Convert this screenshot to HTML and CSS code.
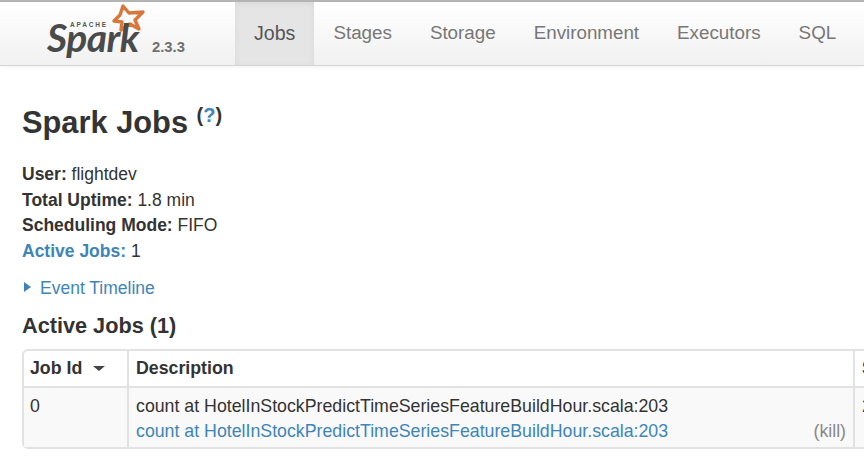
FILE: index.html
```html
<!DOCTYPE html>
<html lang="en">
<head>
  <meta charset="UTF-8">
  <title>Spark Jobs</title>
  <link rel="stylesheet" href="styles.css">
</head>
<body>
  <div class="navbar">
    <a class="brand" href="#">
      <span class="logo">
        <svg class="logo-star" width="36" height="32" viewBox="0 0 36 32">
          <path d="M13 4 L19 11 L33 10 L25 18 L29 27 L20 22 L11 28 L12 20 L4 19 L10 13 Z" fill="none" stroke="#d9773a" stroke-width="3.4" stroke-linejoin="round"/>
        </svg>
        <span class="logo-apache">APACHE</span>
        <span class="logo-spark">Spark</span>
      </span>
      <span class="version">2.3.3</span>
    </a>
    <ul class="nav">
      <li class="active"><a href="#">Jobs</a></li>
      <li><a href="#">Stages</a></li>
      <li><a href="#">Storage</a></li>
      <li><a href="#">Environment</a></li>
      <li><a href="#">Executors</a></li>
      <li><a href="#">SQL</a></li>
    </ul>
  </div>

  <div class="content">
    <h1>Spark Jobs <sup>(<a href="#">?</a>)</sup></h1>

    <ul class="summary">
      <li><strong>User:</strong> flightdev</li>
      <li><strong>Total Uptime:</strong> 1.8 min</li>
      <li><strong>Scheduling Mode:</strong> FIFO</li>
      <li><a href="#"><strong>Active Jobs:</strong></a> 1</li>
    </ul>

    <div class="timeline">
      <span class="arrow-right"></span><a href="#">Event Timeline</a>
    </div>

    <h2>Active Jobs (1)</h2>

    <div class="table-wrap">
      <table>
        <thead>
          <tr>
            <th class="col-id">Job Id <span class="arrow-down"></span></th>
            <th class="col-desc">Description</th>
            <th class="col-sub">Submitted</th>
          </tr>
        </thead>
        <tbody>
          <tr>
            <td>0</td>
            <td>
              <div>count at HotelInStockPredictTimeSeriesFeatureBuildHour.scala:203</div>
              <div class="desc-link">
                <a href="#">count at HotelInStockPredictTimeSeriesFeatureBuildHour.scala:203</a>
                <span class="kill">(kill)</span>
              </div>
            </td>
            <td>2018/11/20</td>
          </tr>
        </tbody>
      </table>
    </div>
  </div>
</body>
</html>
```

FILE: styles.css
```css
html, body {
  height: 460px;
  overflow: hidden;
}

body {
  margin: 0;
  font-family: "Liberation Sans", Arial, sans-serif;
  font-size: 17.5px;
  color: #333;
  background-color: #fff;
}

a {
  color: #3d85b8;
  text-decoration: none;
}

.navbar {
  display: flex;
  height: 63px;
  border-top: 2px solid #b4b4b4;
  border-bottom: 1px solid #d4d4d4;
  background: linear-gradient(to bottom, #fff, #f1f1f1);
  box-shadow: 0 1px 4px rgba(0, 0, 0, 0.06);
}

.brand {
  display: flex;
  width: 235px;
  flex-shrink: 0;
  color: #666;
}

.logo {
  position: relative;
  display: block;
  width: 152px;
  flex-shrink: 0;
}

.logo-star {
  position: absolute;
  left: 110px;
  top: 0;
}

.logo-apache {
  position: absolute;
  left: 70px;
  top: 19px;
  font-size: 6.5px;
  font-weight: bold;
  letter-spacing: 1.8px;
  color: #555;
}

.logo-spark {
  position: absolute;
  left: 47px;
  top: 12px;
  font-family: Lato, sans-serif;
  font-size: 39px;
  font-style: italic;
  font-weight: bold;
  letter-spacing: -0.5px;
  color: #4a4a4a;
}

.version {
  margin-top: 37px;
  font-size: 14.8px;
  font-weight: bold;
  color: #707070;
}

.nav {
  display: flex;
  margin: 0;
  padding: 0;
  list-style: none;
}

.nav a {
  display: block;
  padding: 20px 19px 0;
  height: 43px;
  font-size: 18.8px;
  color: #777;
}

.nav .active a {
  font-size: 19.6px;
  color: #555;
  background-color: #e5e5e5;
  box-shadow: inset 0 2px 6px rgba(0, 0, 0, 0.06);
}

.content {
  padding: 0 22px;
}

h1 {
  margin: 36px 0 0;
  font-size: 30.8px;
  line-height: 42px;
  font-weight: bold;
}

h1 sup {
  font-size: 20px;
  line-height: 0;
  font-weight: bold;
  vertical-align: 11px;
}

.summary {
  margin: 18px 0 0;
  padding: 0;
  list-style: none;
  line-height: 25.5px;
}

.timeline {
  margin-top: 12px;
  line-height: 24px;
}

.arrow-right {
  display: inline-block;
  margin: 0 9px 2px 2px;
  border-top: 5.5px solid transparent;
  border-bottom: 5.5px solid transparent;
  border-left: 7px solid #3d85b8;
}

h2 {
  margin: 12px 0 0;
  font-size: 21.7px;
  line-height: 27px;
  font-weight: bold;
}

.table-wrap {
  width: 1000px;
  margin-top: 10px;
}

table {
  width: 100%;
  table-layout: fixed;
  border-collapse: separate;
  border-spacing: 0;
  border: 2px solid #e2e2e2;
  border-radius: 6px;
  font-size: 17.75px;
}

th, td {
  padding: 7px;
  text-align: left;
  vertical-align: top;
  border-left: 2px solid #e2e2e2;
}

th:first-child, td:first-child {
  border-left: 0;
  padding-left: 6px;
}

th {
  height: 19px;
  border-bottom: 2px solid #e2e2e2;
}

td {
  padding-top: 6px;
  padding-bottom: 3px;
  background-color: #f9f9f9;
  line-height: 25px;
}

.col-id { width: 90px; }
.col-desc { width: 710px; }

.arrow-down {
  display: inline-block;
  margin: 0 0 3px 6px;
  border-left: 6px solid transparent;
  border-right: 6px solid transparent;
  border-top: 5px solid #444;
}

.desc-link {
  display: flex;
  justify-content: space-between;
}

.kill {
  color: #888;
}
```
